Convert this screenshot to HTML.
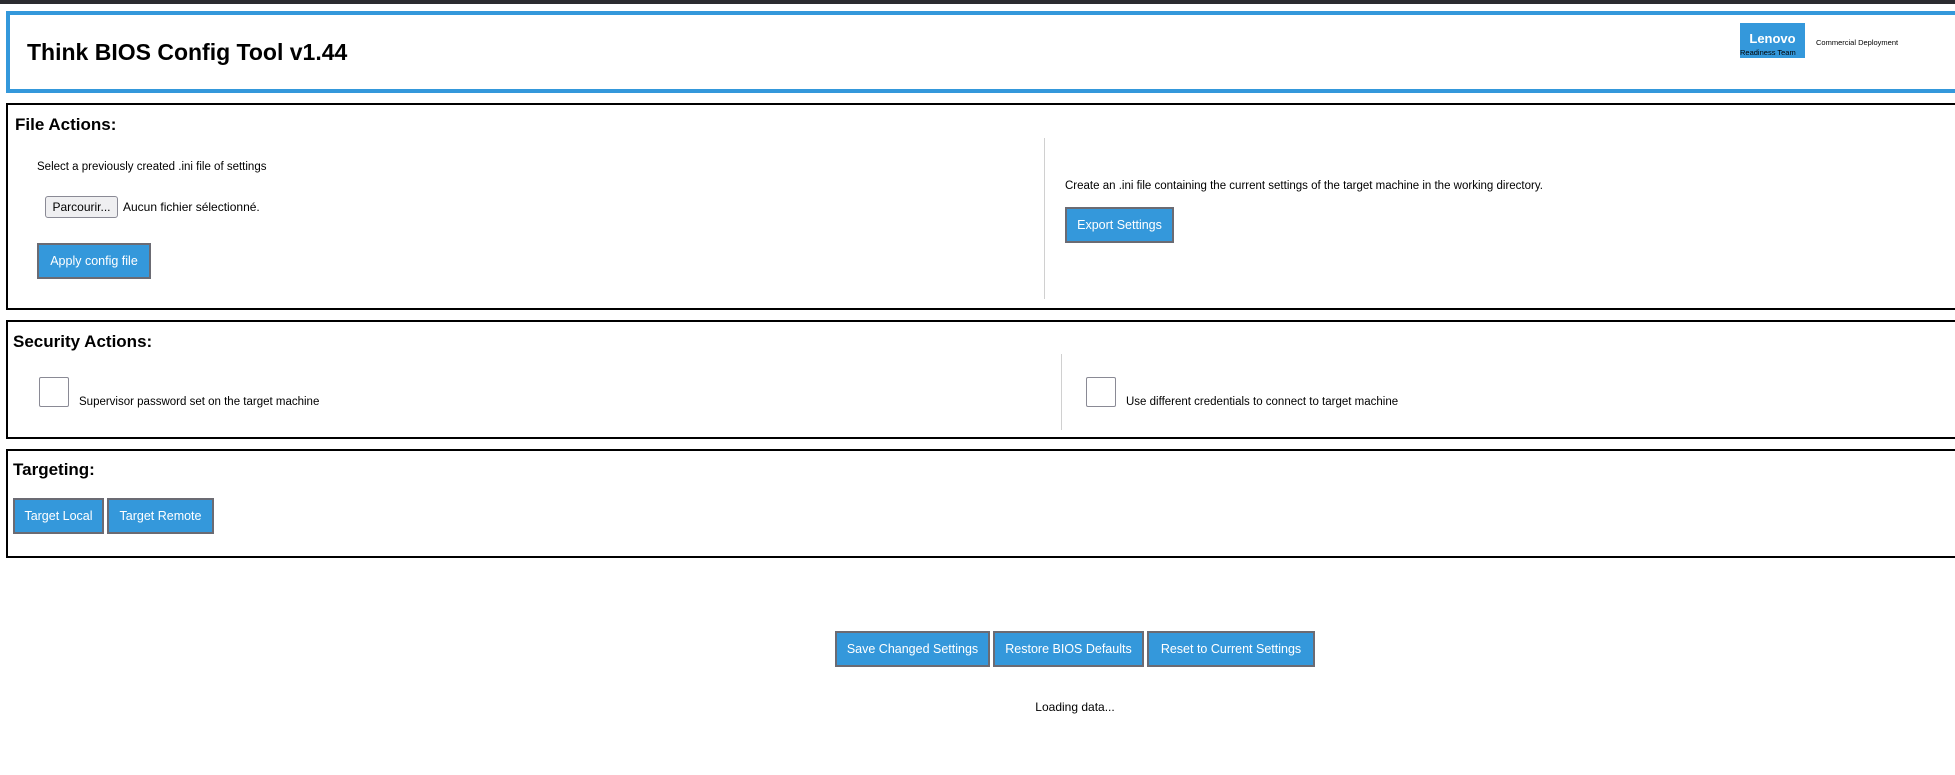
<!DOCTYPE html>
<html><head><meta charset="utf-8">
<style>
*{margin:0;padding:0;box-sizing:border-box}
html,body{width:1955px;height:775px;overflow:hidden;background:#fff;font-family:"Liberation Sans",sans-serif;color:#000}
.a{position:absolute;white-space:nowrap}
.bar{left:0;top:0;width:1955px;height:4px;background:#2b2b30}
.hdr{left:6px;top:11px;width:1960px;height:82px;border:4px solid #3498db}
.box{border:2px solid #000;left:6px;width:1960px}
.h2{font-weight:bold;font-size:17px}
.t{font-size:11.5px}
.btn{background:#3498db;border:2px solid #6b6b73;color:#fff;font-size:12.5px;display:flex;align-items:center;justify-content:center}
.cb{border:1px solid #8a8a95;border-radius:2px;background:#fff}
.vd{width:1px;background:#d0d0d0}
</style></head><body>
<div class="a bar"></div>
<div class="a hdr"></div>
<div class="a" style="left:27px;top:39px;font-size:23px;font-weight:bold">Think BIOS Config Tool v1.44</div>
<div class="a" style="left:1740px;top:23px;width:65px;height:35px;background:#3498db"></div>
<div class="a" style="left:1740px;top:31px;width:65px;text-align:center;color:#fff;font-size:13px;font-weight:bold">Lenovo</div>
<div class="a" style="left:1740px;top:48px;font-size:7.5px">Readiness Team</div>
<div class="a" style="left:1816px;top:38px;font-size:7.5px">Commercial Deployment</div>

<div class="a box" style="top:103px;height:207px"></div>
<div class="a h2" style="left:15px;top:115px">File Actions:</div>
<div class="a t" style="left:37px;top:161px">Select a previously created .ini file of settings</div>
<div class="a" style="left:45px;top:196px;width:73px;height:22px;background:#efeff1;border:1px solid #8a8a95;border-radius:3px;font-size:12px;display:flex;align-items:center;justify-content:center">Parcourir...</div>
<div class="a" style="left:123px;top:200px;font-size:12px">Aucun fichier sélectionné.</div>
<div class="a btn" style="left:37px;top:243px;width:114px;height:36px">Apply config file</div>
<div class="a vd" style="left:1044px;top:138px;height:161px"></div>
<div class="a t" style="left:1065px;top:180px">Create an .ini file containing the current settings of the target machine in the working directory.</div>
<div class="a btn" style="left:1065px;top:207px;width:109px;height:36px">Export Settings</div>

<div class="a box" style="top:320px;height:119px"></div>
<div class="a h2" style="left:13px;top:332px">Security Actions:</div>
<div class="a cb" style="left:39px;top:377px;width:30px;height:30px"></div>
<div class="a t" style="left:79px;top:396px">Supervisor password set on the target machine</div>
<div class="a vd" style="left:1061px;top:354px;height:76px"></div>
<div class="a cb" style="left:1086px;top:377px;width:30px;height:30px"></div>
<div class="a t" style="left:1126px;top:396px">Use different credentials to connect to target machine</div>

<div class="a box" style="top:449px;height:109px"></div>
<div class="a h2" style="left:13px;top:460px">Targeting:</div>
<div class="a btn" style="left:13px;top:498px;width:91px;height:36px">Target Local</div>
<div class="a btn" style="left:107px;top:498px;width:107px;height:36px">Target Remote</div>

<div class="a btn" style="left:835px;top:631px;width:155px;height:36px">Save Changed Settings</div>
<div class="a btn" style="left:993px;top:631px;width:151px;height:36px">Restore BIOS Defaults</div>
<div class="a btn" style="left:1147px;top:631px;width:168px;height:36px">Reset to Current Settings</div>
<div class="a" style="left:975px;top:700px;width:200px;text-align:center;font-size:12px">Loading data...</div>
</body></html>
